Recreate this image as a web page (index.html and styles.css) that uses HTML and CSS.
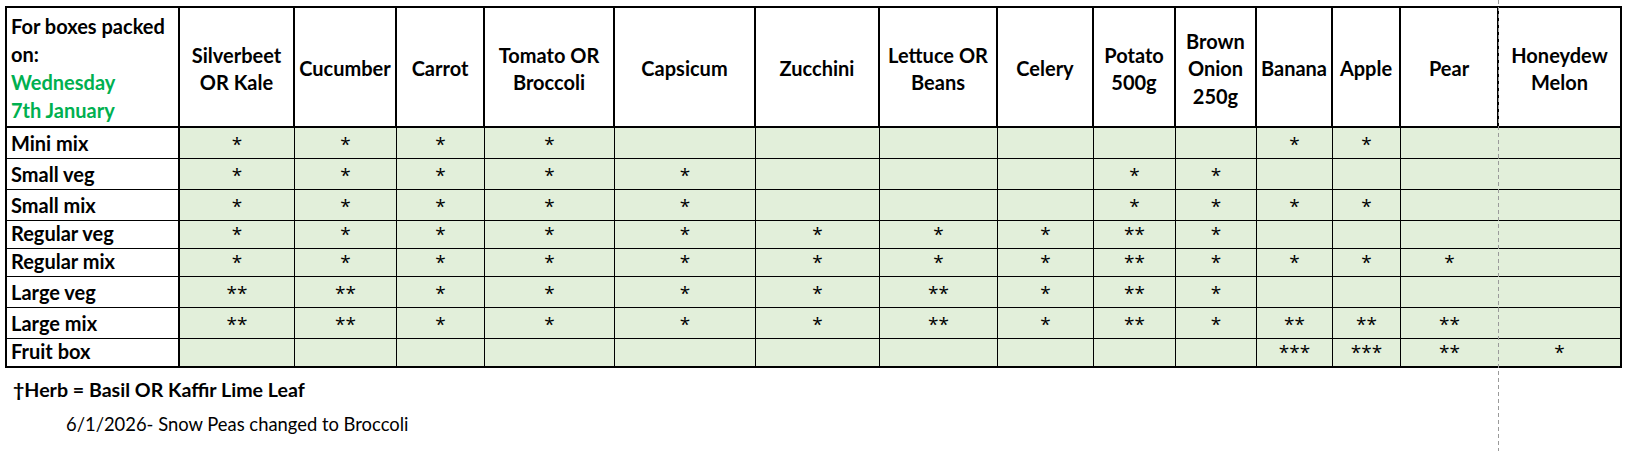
FILE: index.html
```html
<!DOCTYPE html>
<html>
<head>
<meta charset="utf-8">
<link rel="stylesheet" href="styles.css">
</head>
<body>
<div class="sheet">
  <div class="grid">
    <div class="hd first"><div>For boxes packed<br>on:<br><span class="green">Wednesday<br>7th January</span></div></div>
    <div class="hd"><div>Silverbeet<br>OR Kale</div></div>
    <div class="hd"><div>Cucumber</div></div>
    <div class="hd"><div>Carrot</div></div>
    <div class="hd"><div>Tomato OR<br>Broccoli</div></div>
    <div class="hd"><div>Capsicum</div></div>
    <div class="hd"><div>Zucchini</div></div>
    <div class="hd"><div>Lettuce OR<br>Beans</div></div>
    <div class="hd"><div>Celery</div></div>
    <div class="hd"><div>Potato<br>500g</div></div>
    <div class="hd"><div>Brown<br>Onion<br>250g</div></div>
    <div class="hd"><div>Banana</div></div>
    <div class="hd"><div>Apple</div></div>
    <div class="hd"><div>Pear</div></div>
    <div class="hd last"><div>Honeydew<br>Melon</div></div>
  </div>
  <div class="notes">
    <div class="herb">†Herb = Basil OR Kaffir Lime Leaf</div>
    <div class="change">6/1/2026- Snow Peas changed to Broccoli</div>
  </div>
</div>
<div class="pagebreak"></div>
<script>
const rows = [
  ["Mini mix",    ["*","*","*","*","","","","","","","*","*","",""]],
  ["Small veg",   ["*","*","*","*","*","","","","*","*","","","",""]],
  ["Small mix",   ["*","*","*","*","*","","","","*","*","*","*","",""]],
  ["Regular veg", ["*","*","*","*","*","*","*","*","**","*","","","",""]],
  ["Regular mix", ["*","*","*","*","*","*","*","*","**","*","*","*","*",""]],
  ["Large veg",   ["**","**","*","*","*","*","**","*","**","*","","","",""]],
  ["Large mix",   ["**","**","*","*","*","*","**","*","**","*","**","**","**",""]],
  ["Fruit box",   ["","","","","","","","","","","***","***","**","*"]]
];
const grid = document.querySelector('.grid');
rows.forEach((r, ri) => {
  const last = ri === rows.length - 1;
  const lab = document.createElement('div');
  lab.className = 'cell label' + (last ? ' lastrow' : '');
  lab.textContent = r[0];
  grid.appendChild(lab);
  r[1].forEach((v, ci) => {
    const c = document.createElement('div');
    let cls = 'cell data';
    if (ci === 12) cls += ' pear';
    if (ci === 13) cls += ' lastcol';
    if (last) cls += ' lastrow';
    c.className = cls;
    c.textContent = v;
    grid.appendChild(c);
  });
});
</script>
</body>
</html>
```
FILE: styles.css
```css
html, body {
  margin: 0;
  padding: 0;
  height: 100%;
  overflow: hidden;
  background: #fff;
}
body {
  font-family: Lato, "Open Sans", sans-serif;
  color: #000;
}
.sheet {
  padding: 6px 0 0 5px;
}
.grid {
  display: grid;
  width: max-content;
  grid-template-columns: 173px 115px 102px 88px 130px 141px 124px 118px 96px 82px 81px 76px 68px 98px 121px;
  grid-template-rows: 120px 31px 31px 31px 28px 28px 31px 31px 27px;
  border: 2px solid #000;
}
.hd {
  box-sizing: border-box;
  border-right: 2px solid #000;
  border-bottom: 2px solid #000;
  display: flex;
  align-items: center;
  justify-content: center;
  text-align: center;
  font-weight: 700;
  font-size: 20px;
  line-height: 27.5px;
  padding-top: 4px;
  background: #fff;
}
.hd.first {
  justify-content: flex-start;
  text-align: left;
  padding-left: 4px;
  padding-top: 2px;
  line-height: 28px;
}
.hd.last {
  border-right: none;
}
.green {
  color: #00b050;
}
.cell {
  box-sizing: border-box;
  border-right: 1px solid #000;
  border-bottom: 1px solid #000;
  display: flex;
  align-items: flex-end;
  font-size: 20px;
  line-height: 24px;
  padding-bottom: 3px;
}
.label {
  border-right: 2px solid #000;
  font-weight: 700;
  padding-left: 4px;
  background: #fff;
}
.data {
  justify-content: center;
  background: #e2efda;
  font-family: "Open Sans", sans-serif;
  font-size: 19px;
  padding-bottom: 2px;
}
.data.pear {
  border-right-color: #e2efda;
}
.data.lastcol {
  border-right: none;
}
.lastrow {
  border-bottom: none;
}
.notes {
  padding-top: 8px;
}
.herb {
  font-weight: 700;
  font-size: 19.6px;
  line-height: 28px;
  padding-left: 8px;
}
.change {
  font-size: 18.4px;
  line-height: 28px;
  padding-left: 61px;
  padding-top: 6px;
}
.pagebreak {
  position: absolute;
  left: 1498px;
  top: 0;
  bottom: 0;
  width: 1px;
  background: repeating-linear-gradient(to bottom, #9a9a9a 0 4px, transparent 4px 7px);
}
```
